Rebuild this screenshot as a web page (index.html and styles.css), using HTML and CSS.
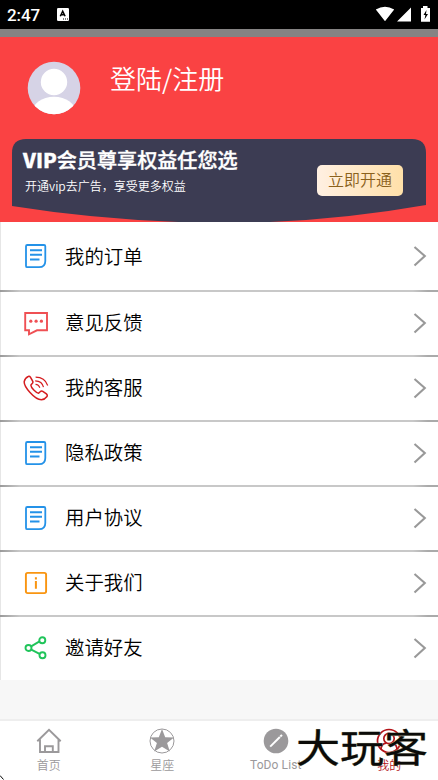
FILE: index.html
```html
<!DOCTYPE html>
<html lang="zh-CN">
<head>
<meta charset="utf-8">
<title>我的</title>
<link rel="stylesheet" href="styles.css">
</head>
<body>
<svg class="defs" width="0" height="0">
  <symbol id="doc" viewBox="0 0 26 26"><path d="M4.3 2H21Q22.3 2 22.3 3.2V18Q22.3 24.2 16 24.2H4.3Q3 24.2 3 22.9V3.2Q3 2 4.3 2Z" fill="none" stroke="#2492e8" stroke-width="1.8"/><path d="M7 7.3H19M7 11.8H19M7 16.6H16.5" fill="none" stroke="#2492e8" stroke-width="2"/></symbol>
  <symbol id="arrow" viewBox="0 0 14 22"><path d="M1.5 2L11.8 11L1.5 20.5" fill="none" stroke="#999" stroke-width="2.1"/></symbol>
</svg>
<main class="phone">
  <header class="status">
    <span class="clock">2:47</span>
    <svg class="app-icon" width="12" height="13" viewBox="0 0 12 13"><rect width="12" height="13" rx="1.3" fill="#fff"/><path d="M3.3 8.3L5.7 3.2L8.1 8.3M4.2 6.7H7.3" fill="none" stroke="#000" stroke-width="1.5"/><path d="M6 11H7M8 11H9M10 11H11" stroke="#000" stroke-width="1"/></svg>
    <svg class="signals" width="56" height="18" viewBox="0 0 56 18"><path d="M.8 4.6Q10 -1.2 19.2 4.6L10 16.2ZM22 16.6L36 2.5V16.6ZM46 3H48V1H52.5V3H55V16.8H46Z" fill="#fff"/><path d="M51.5 5L48.5 10H50.4L49.5 14.5L53 9H51Z" fill="#000"/></svg>
  </header>
  <div class="strip"></div>
  <section class="profile">
    <div class="user">
      <svg width="54" height="54" viewBox="0 0 54 54"><defs><clipPath id="disc"><circle cx="27" cy="27" r="26.3"/></clipPath></defs><g clip-path="url(#disc)"><rect width="54" height="54" fill="#d6d3e6"/><circle cx="27" cy="21" r="13.2" fill="#fff"/><ellipse cx="27" cy="52" rx="22" ry="16.3" fill="#fff"/></g></svg>
      <span class="login">登陆/注册</span>
    </div>
    <div class="vip">
      <svg class="vip-bg" width="414" height="83" viewBox="0 0 414 83"><path d="M0 14Q0 0 14 0H400Q414 0 414 14V66Q312 84 210 84Q100 83 0 67Z" fill="#3c3c53"/></svg>
      <div class="vip-copy"><h1><b>VIP</b>会员尊享权益任您选</h1><p>开通vip去广告，享受更多权益</p></div>
      <span class="open">立即开通</span>
    </div>
  </section>
  <nav class="menu">
    <div class="row first"><svg class="icon"><use href="#doc"/></svg><span>我的订单</span><svg class="arrow"><use href="#arrow"/></svg></div>
    <div class="row"><svg class="icon" viewBox="0 0 26 26"><path d="M2.2 3H24V20.3H14L6 24.3V20.3H2.2Z" fill="none" stroke="#ef5054" stroke-width="1.9"/><g fill="#ef5054"><circle cx="7.8" cy="11.2" r="1.6"/><circle cx="13.1" cy="11.2" r="1.6"/><circle cx="18.4" cy="11.2" r="1.6"/></g></svg><span>意见反馈</span><svg class="arrow"><use href="#arrow"/></svg></div>
    <div class="row"><svg class="icon" viewBox="0 0 26 26"><path d="M5.2 1.5Q2 3 1.2 6.6Q.9 10.7 6.8 17.2Q13.5 24.7 18.4 24.8Q21.7 24.6 24 21.5Q24.7 20 23.4 18.9L19.8 16.3Q18.4 15.5 17.1 16.8L15.6 18.2Q13.8 18 10.8 14.9Q7.7 11.8 7.9 10.1L9.4 8.3Q10.3 7.1 9.6 6L7.4 2.2Q6.5 .8 5.2 1.5Z" fill="none" stroke="#d51d20" stroke-width="1.5"/><path d="M12.5 9.4Q15.7 9.4 16.8 12.8M12.2 5.8Q19.2 6 20.5 12.2M12.6 2.2Q21.8 2.3 24.7 10.5" fill="none" stroke="#d51d20" stroke-width="1.2"/></svg><span>我的客服</span><svg class="arrow"><use href="#arrow"/></svg></div>
    <div class="row"><svg class="icon"><use href="#doc"/></svg><span>隐私政策</span><svg class="arrow"><use href="#arrow"/></svg></div>
    <div class="row"><svg class="icon"><use href="#doc"/></svg><span>用户协议</span><svg class="arrow"><use href="#arrow"/></svg></div>
    <div class="row"><svg class="icon" viewBox="0 0 26 26"><rect x="2.9" y="2.9" width="20.2" height="20.2" rx="1.8" fill="none" stroke="#f99511" stroke-width="1.9"/><path d="M12.9 7.3V9.5M12.9 11V18.7" stroke="#f99511" stroke-width="2"/></svg><span>关于我们</span><svg class="arrow"><use href="#arrow"/></svg></div>
    <div class="row last"><svg class="icon" viewBox="0 0 26 26"><g fill="none" stroke="#20c45a" stroke-width="1.9"><path d="M8.2 11.4L16.5 6.4M8.3 14.7L17 19.2"/><circle cx="5.5" cy="13" r="3"/><circle cx="19.3" cy="5.2" r="3"/><circle cx="19.5" cy="20.3" r="3"/></g></svg><span>邀请好友</span><svg class="arrow"><use href="#arrow"/></svg></div>
  </nav>
  <footer class="tabs">
    <div class="tab"><svg viewBox="0 0 26 26"><path d="M1.3 13.2L13 1.8L24.7 13.2M4 11.5V24H22.5V11.5M9 24V18.2H16.8V24" fill="none" stroke="#9b999b" stroke-width="1.9"/></svg><span>首页</span></div>
    <div class="tab"><svg viewBox="0 0 26 26"><circle cx="13" cy="13" r="12" fill="none" stroke="#9b999b"/><path d="M13 1L16.2 9.2L25 9.5L18.1 15L20.8 23.6L13 18.7L5.2 23.6L7.9 15L1 9.5L9.8 9.2Z" fill="#9b999b"/></svg><span>星座</span></div>
    <div class="tab"><svg viewBox="0 0 26 26"><circle cx="13" cy="13" r="12.3" fill="#9b999b"/><path d="M7.2 18.6L16.9 9" stroke="#fff" stroke-width="2"/><path d="M17.3 8.5L19 6.9" stroke="#fff" stroke-width="2"/></svg><span>ToDo List</span></div>
    <div class="tab active"><svg viewBox="0 0 26 26"><g fill="none" stroke="#b31217" stroke-width="1.7"><circle cx="13" cy="13" r="11.5"/><circle cx="13" cy="10.5" r="5.2"/><path d="M5 21Q5.5 16 10 15.2M16 15.2Q20.5 16 21 21"/></g></svg><span>我的</span></div>
  </footer>
  <div class="watermark">大玩客</div>
  <svg class="corner" width="4" height="5" viewBox="0 0 4 5"><path d="M0 .5L3.5 4.5" stroke="#000"/></svg>
</main>
</body>
</html>
```
FILE: styles.css
```css
* { box-sizing: border-box; }
body { margin: 0; background: #f7f7f7; font-family: "Noto Sans CJK SC", sans-serif; }
svg { display: block; flex: none; }
.defs { position: absolute; }
.phone { position: relative; display: flex; flex-direction: column; width: 438px; height: 780px; overflow: hidden; }
.status { display: flex; align-items: center; height: 29px; padding: 0 7px; background: #000; color: #fff; }
.clock { width: 50px; padding-top: 1px; font: 500 17px/29px Roboto, sans-serif; letter-spacing: -.1px; }
.signals { margin-left: auto; margin-top: -2px; }
.strip { height: 8px; background: #858383; }
.profile { height: 185px; padding: 24px 12px 0; background: #fa4243; }
.user { display: flex; height: 78px; padding-left: 15px; color: #fff; }
.login { margin-left: 29px; margin-top: -1px; font-size: 26px; line-height: 36px; font-weight: 350; }
.vip { position: relative; display: flex; height: 83px; padding: 0 23px 0 11px; justify-content: space-between; }
.vip-bg { position: absolute; inset: 0; }
.vip-copy { position: relative; color: #fff; white-space: nowrap; }
h1 { margin: 8px 0 0; font-size: 20.1px; line-height: 26px; font-weight: 500; -webkit-text-stroke: .35px #fff; }
h1 b { font-weight: 900; }
p { margin: 4px 0 0 2px; font-size: 12px; line-height: 18px; font-weight: 350; }
.open { position: relative; width: 86px; height: 31px; margin-top: 26px; border-radius: 5px; background: linear-gradient(90deg, #fff0e2, #ffe0a9); color: #8a611c; font-size: 16px; line-height: 29px; font-weight: 350; text-align: center; }
.menu { height: 458px; }
.row { display: flex; align-items: center; height: 65px; padding: 0 11px 4px 23px; background: linear-gradient(90deg, #999, #c8c8c8 20px, #c8c8c8 calc(100% - 25px), #aaa calc(100% - 10px)) 0 100% / 100% 2px no-repeat, linear-gradient(#e6e6e6, #e6e6e6) 0 0 / 1px 100% no-repeat, #fff; color: #000; font-size: 19.4px; line-height: 28px; font-weight: 350; }
.row.first { height: 70px; padding-bottom: 2px; }
.row.last { height: 63px; padding-bottom: 2px; background: linear-gradient(#e6e6e6, #e6e6e6) 0 0 / 1px 100% no-repeat, #fff; }
.icon { width: 26px; height: 26px; margin-right: 16px; }
.row span { margin-top: -1px; }
.arrow { width: 14px; height: 22px; margin-left: auto; }
.tabs { display: flex; height: 61px; margin: auto -8px 0; border-top: 2px solid #eee; background: #fff; }
.tab { display: flex; flex: 1; flex-direction: column; align-items: center; padding-top: 7px; color: #9b999b; font-size: 12px; line-height: 18px; font-weight: 350; }
.tab svg { width: 26px; height: 26px; margin-bottom: 2px; }
.tab:nth-child(3) span { font-family: Roboto, sans-serif; font-weight: 400; letter-spacing: .1px; }
.tab.active { color: #b31217; }
.watermark { position: absolute; left: 296px; top: 716px; color: #0b0b08; font-size: 44px; line-height: 58px; font-weight: 400; -webkit-text-stroke: .3px #0b0b08; white-space: nowrap; transform: scaleY(.87); text-shadow: 0 0 1px #d9d8b8, 0 0 1px #d9d8b8; }
.corner { position: absolute; left: 0; bottom: 0; }
```
